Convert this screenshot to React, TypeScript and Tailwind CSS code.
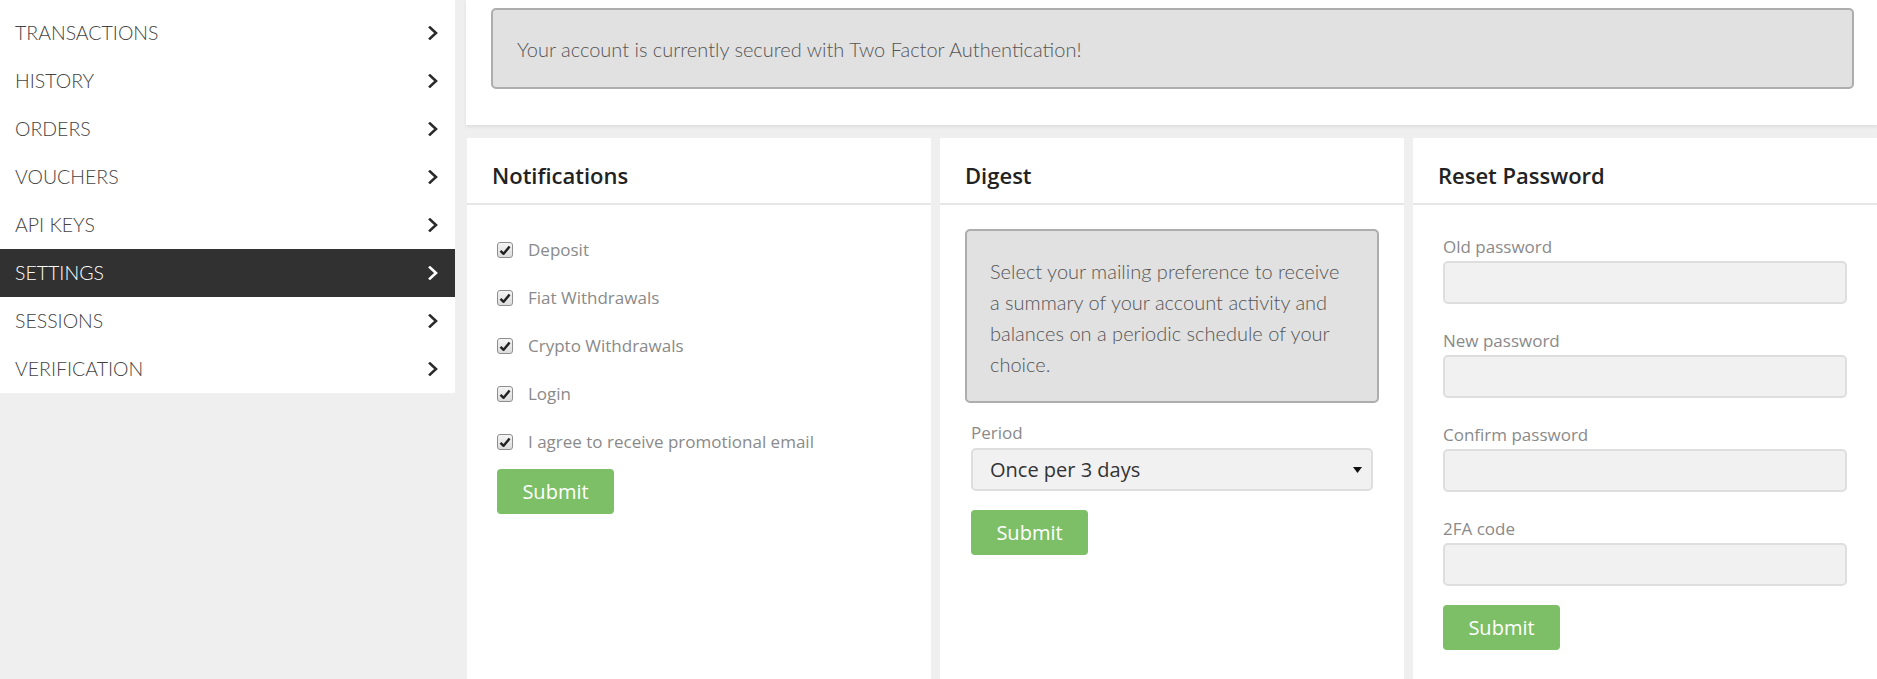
import React from 'react'

const menu = ['TRANSACTIONS', 'HISTORY', 'ORDERS', 'VOUCHERS', 'API KEYS', 'SETTINGS', 'SESSIONS', 'VERIFICATION']

function Chevron({ light }: { light?: boolean }) {
  return (
    <svg width="10" height="14" viewBox="0 0 10 14" className="shrink-0">
      <polyline
        points="2,1.5 8,7 2,12.5"
        fill="none"
        stroke={light ? '#ffffff' : '#2b2b2b'}
        strokeWidth="2.6"
        strokeLinecap="square"
      />
    </svg>
  )
}

function CheckBox() {
  return (
    <div className="w-[16px] h-[16px] rounded-[3px] border border-[#8f8f8f] bg-gradient-to-b from-[#f4f4f4] to-[#dcdcdc] flex items-center justify-center shrink-0">
      <svg width="12" height="11" viewBox="0 0 12 11">
        <path d="M1.5 5.8 L4.6 8.8 L10.6 1.6" fill="none" stroke="#222" strokeWidth="2.4" strokeLinejoin="round" />
      </svg>
    </div>
  )
}

function Card({ title, children }: { title: string; children: React.ReactNode }) {
  return (
    <div className="bg-white flex flex-col">
      <div className="h-[67px] border-b-2 border-[#e6e6e6] px-[25px] pt-[22px]">
        <h3 className="text-[22px] leading-[30px] font-semibold text-[#222]">{title}</h3>
      </div>
      {children}
    </div>
  )
}

function SubmitButton({ className = '' }: { className?: string }) {
  return (
    <button className={`h-[45px] w-[117px] rounded-[4px] bg-[#7dbf66] text-white text-[20px] ${className}`}>
      Submit
    </button>
  )
}

export default function App() {
  const notifications = ['Deposit', 'Fiat Withdrawals', 'Crypto Withdrawals', 'Login', 'I agree to receive promotional email']
  const fields = ['Old password', 'New password', 'Confirm password', '2FA code']

  return (
    <div className="min-h-screen h-[679px] overflow-hidden bg-[#efefef] flex font-['Open_Sans',sans-serif]">
      {/* Sidebar */}
      <div className="w-[455px] shrink-0 self-start bg-white pt-[9px]">
        {menu.map((item) => {
          const active = item === 'SETTINGS'
          return (
            <div
              key={item}
              className={`h-[48px] flex items-center justify-between pl-[15px] pr-[17px] ${
                active ? 'bg-[#313131] text-white' : 'text-[#444]'
              }`}
            >
              <span className="font-['Lato',sans-serif] text-[19.5px] font-light">{item}</span>
              <Chevron light={active} />
            </div>
          )
        })}
      </div>

      {/* Main */}
      <div className="flex-1 ml-[11px] flex flex-col min-w-0">
        <div className="h-[125px] bg-white shadow-[0_2px_3px_rgba(0,0,0,0.08)] px-[25px] pt-[8px] pr-[23px]">
          <div className="h-[81px] rounded-[5px] border-2 border-[#adadad] bg-[#e1e1e1] flex items-center px-[24px]">
            <p className="font-['Lato',sans-serif] text-[20px] font-light text-[#555]">
              Your account is currently secured with Two Factor Authentication!
            </p>
          </div>
        </div>

        <div className="mt-[13px] flex-1 grid grid-cols-[464px_464px_464px] gap-[9px] pl-[1px]">
          {/* Notifications */}
          <Card title="Notifications">
            <div className="px-[30px] pt-[21px]">
              {notifications.map((n) => (
                <div key={n} className="h-[48px] flex items-center gap-[15px]">
                  <CheckBox />
                  <span className="text-[17px] text-[#8a8a8a]">{n}</span>
                </div>
              ))}
              <SubmitButton className="mt-[3px]" />
            </div>
          </Card>

          {/* Digest */}
          <Card title="Digest">
            <div className="px-[25px] pt-[24px]">
              <div className="h-[174px] rounded-[5px] border-2 border-[#adadad] bg-[#e1e1e1] px-[23px] pt-[25px]">
                <p className="font-['Lato',sans-serif] text-[20px] leading-[31px] font-light text-[#555]">
                  Select your mailing preference to receive
                  <br />
                  a summary of your account activity and
                  <br />
                  balances on a periodic schedule of your
                  <br />
                  choice.
                </p>
              </div>
              <div className="px-[6px]">
                <label className="block mt-[20px] text-[17px] leading-[20px] text-[#8a8a8a]">Period</label>
                <div className="mt-[5px] h-[43px] rounded-[5px] border-2 border-[#dedede] bg-[#f1f1f1] flex items-center justify-between pl-[17px] pr-[9px]">
                  <span className="text-[20px] text-[#333]">Once per 3 days</span>
                  <svg width="9" height="6" viewBox="0 0 9 6">
                    <path d="M0 0 H9 L4.5 6 Z" fill="#111" />
                  </svg>
                </div>
                <SubmitButton className="mt-[19px] w-[115px]" />
              </div>
            </div>
          </Card>

          {/* Reset Password */}
          <Card title="Reset Password">
            <div className="px-[30px] pt-[32px] flex flex-col">
              {fields.map((f, i) => (
                <div key={f} className={i > 0 ? 'mt-[27px]' : ''}>
                  <label className="block text-[17px] leading-[20px] text-[#8a8a8a]">{f}</label>
                  <div className="mt-[4px] h-[43px] rounded-[5px] border-2 border-[#dedede] bg-[#f1f1f1]" />
                </div>
              ))}
              <SubmitButton className="mt-[19px] h-[44px]" />
            </div>
          </Card>
        </div>
      </div>
    </div>
  )
}
